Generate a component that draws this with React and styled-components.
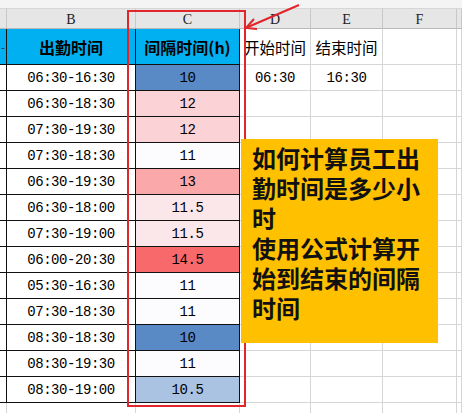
import React from 'react';
import styled, { createGlobalStyle } from 'styled-components';

const GlobalStyle = createGlobalStyle`
    html, body {
        margin: 0;
        padding: 0;
        background: #fff;
        overflow: hidden;
    }
`;

const rows = [
    ['06:30-16:30', 10],
    ['06:30-18:30', 12],
    ['07:30-19:30', 12],
    ['07:30-18:30', 11],
    ['06:30-19:30', 13],
    ['06:30-18:00', 11.5],
    ['07:30-19:00', 11.5],
    ['06:00-20:30', 14.5],
    ['05:30-16:30', 11],
    ['07:30-18:30', 11],
    ['08:30-18:30', 10],
    ['08:30-19:30', 11],
    ['08:30-19:00', 10.5],
];

// excel 3색 색조 (최소-중간-최대)
const MIN = [90, 138, 198];
const MID = [252, 252, 255];
const MAX = [248, 105, 107];

const mix = (a, b, t) => a.map((v, i) => Math.round(v + (b[i] - v) * t));

const scaleColor = (v) => {
    const lo = 10, mid = 11, hi = 14.5;
    const c = v <= mid ? mix(MIN, MID, (v - lo) / (mid - lo)) : mix(MID, MAX, (v - mid) / (hi - mid));
    return `rgb(${c.join(',')})`;
};

const formatHours = (v) => (Number.isInteger(v) ? String(v) : v.toFixed(1));

export default function App() {
    return (
        <Page>
            <GlobalStyle />
            <Sheet>
                <TopBand />

                <ColHead />
                <ColHead>B</ColHead>
                <ColHead>C</ColHead>
                <ColHead>D</ColHead>
                <ColHead>E</ColHead>
                <ColHead>F</ColHead>
                <ColHead />

                <Cell $table $fill="#00B0F0"><Stub>-</Stub></Cell>
                <Cell $table $fill="#00B0F0" $bold>出勤时间</Cell>
                <Cell $table $fill="#00B0F0" $bold>间隔时间(h)</Cell>
                <Cell $label>开始时间</Cell>
                <Cell $label>结束时间</Cell>
                <Cell />
                <Cell />

                {rows.map(([range, hours], i) => (
                    <React.Fragment key={i}>
                        <Cell $table />
                        <Cell $table $mono>{range}</Cell>
                        <Cell $table $mono style={{ background: scaleColor(hours) }}>{formatHours(hours)}</Cell>
                        <Cell $mono>{i === 0 ? '06:30' : ''}</Cell>
                        <Cell $mono>{i === 0 ? '16:30' : ''}</Cell>
                        <Cell />
                        <Cell />
                    </React.Fragment>
                ))}

                {Array.from({ length: 7 }).map((_, i) => <Cell key={`e${i}`} />)}
            </Sheet>

            <Highlight />
            <Arrow viewBox="0 0 462 413">
                <line x1="299" y1="5" x2="248" y2="27" />
                <polyline points="254,19 246,28 257,29" />
            </Arrow>

            <Note>
                <NoteText>如何计算员工出勤时间是多少小时</NoteText>
                <NoteText>使用公式计算开始到结束的间隔时间</NoteText>
            </Note>
        </Page>
    );
}

const Page = styled.div`
    position: relative;
    width: 462px;
    height: 413px;
    overflow: hidden;
    background: #fff;
`;

const Sheet = styled.div`
    display: grid;
    grid-template-columns: 7px 129px 104px 71px 72px 74px 1fr;
    grid-template-rows: 9px 20px 36px repeat(13, 26px) 26px;
`;

const TopBand = styled.div`
    grid-column: 1 / -1;
    background: #f4f4f4;
    border-bottom: 1px solid #d6d6d6;
`;

const ColHead = styled.div`
    display: flex;
    align-items: center;
    justify-content: center;
    background: #e6e6e6;
    border-right: 1px solid #c8c8c8;
    border-bottom: 1px solid #b8b8b8;
    font-family: "Liberation Serif", serif;
    font-size: 14px;
    color: #222;
    box-sizing: border-box;
    padding-top: 2px;
`;

const Cell = styled.div`
    display: flex;
    align-items: center;
    justify-content: center;
    box-sizing: border-box;
    overflow: hidden;
    white-space: nowrap;
    background: ${(p) => p.$fill || '#fff'};
    border-right: 1px solid ${(p) => (p.$table ? '#111' : '#d6d6d6')};
    border-bottom: 1px solid ${(p) => (p.$table ? '#111' : '#d6d6d6')};
    color: #000;
    font-family: ${(p) => (p.$mono ? '"Liberation Mono", monospace' : '"Noto Sans CJK SC", sans-serif')};
    font-size: ${(p) => (p.$mono ? '14px' : p.$label ? '15.5px' : '16px')};
    font-weight: ${(p) => (p.$bold ? 700 : 400)};
    letter-spacing: ${(p) => (p.$mono ? '-0.45px' : '0')};
    padding-top: ${(p) => (p.$mono ? '1px' : '0')};
`;

const Stub = styled.span`
    font-family: "Liberation Sans", sans-serif;
    font-size: 11px;
    color: #333;
`;

const Highlight = styled.div`
    position: absolute;
    left: 127px;
    top: 10px;
    width: 119px;
    height: 397px;
    box-sizing: border-box;
    border: 2px solid #e0262b;
    pointer-events: none;
`;

const Arrow = styled.svg`
    position: absolute;
    left: 0;
    top: 0;
    width: 462px;
    height: 413px;
    fill: none;
    stroke: #e0262b;
    stroke-width: 2;
    pointer-events: none;
`;

const Note = styled.div`
    position: absolute;
    left: 241px;
    top: 139px;
    width: 197px;
    height: 204px;
    box-sizing: border-box;
    padding: 4px 0 0 11px;
    background: #FFC000;
`;

const NoteText = styled.div`
    width: 172px;
    font-family: "Noto Sans CJK SC", sans-serif;
    font-size: 24px;
    line-height: 30px;
    font-weight: 700;
    color: #111;
`;
